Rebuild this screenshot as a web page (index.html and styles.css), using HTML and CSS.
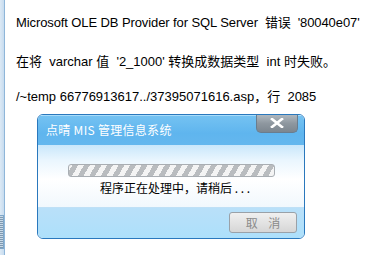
FILE: index.html
```html
<!DOCTYPE html>
<html>
<head>
<meta charset="utf-8">
<link rel="stylesheet" href="styles.css">
</head>
<body>
<div class="page">
  <div class="strip"><div class="grip"></div></div>
  <div class="content">
    <p class="line l1">Microsoft OLE DB Provider for SQL Server&nbsp; 错误&nbsp; '80040e07'</p>
    <p class="line l2">在将&nbsp; varchar 值&nbsp; '2_1000' 转换成数据类型&nbsp; int 时失败。</p>
    <p class="line l3">/~temp 66776913617../37395071616.asp，行&nbsp; 2085</p>
    <div class="dialog">
      <div class="titlebar">
        <span class="title">点晴 MIS 管理信息系统</span>
        <span class="close"><svg width="14" height="10" viewBox="0 0 14 10"><path d="M2 1 L12 9 M12 1 L2 9" stroke="#fff" stroke-width="2.6" stroke-linecap="square"/></svg></span>
      </div>
      <div class="dbody">
        <div class="progress"></div>
        <div class="msg">程序正在处理中，请稍后 . . .</div>
      </div>
      <div class="dfoot">
        <button class="cancel">取 消</button>
      </div>
    </div>
  </div>
</div>
</body>
</html>
```
FILE: styles.css
```css
html, body { margin: 0; padding: 0; background: #fff; }
.page { display: flex; width: 370px; height: 255px; overflow: hidden; }
.strip {
  width: 4px; flex: none; height: 255px;
  background: linear-gradient(to right, #dce9f5, #c7dcef);
  border-right: 1px solid #8fb6d9;
  position: relative;
}
.grip {
  position: absolute; left: 0; top: 215px; width: 3px; height: 32px;
  border: 1px solid #7fa7c9; border-left: none;
  background: repeating-linear-gradient(to bottom, #c8d9e8 0 1px, #7f99b0 1px 2px);
}
.content { padding-left: 11px; font-family: "Liberation Sans", Arial, "Noto Sans CJK SC", sans-serif; font-size: 13px; color: #000; }
.line { margin: 0; line-height: 16px; white-space: nowrap; }
.l1 { margin-top: 15px; letter-spacing: -0.1px; }
.l2 { margin-top: 23px; }
.l3 { margin-top: 19px; }
.dialog {
  margin-top: 9px; margin-left: 21px;
  width: 266px; height: 123px;
  border: 1px solid #2a78bd; border-radius: 6px;
  overflow: hidden;
  display: flex; flex-direction: column;
  font-family: "Noto Sans CJK SC", sans-serif; font-size: 12px;
}
.titlebar {
  height: 29px; flex: none;
  background: linear-gradient(to bottom, #74c2f2 0%, #5fb5ee 60%, #64b7ee 100%);
  border-top: 1px solid #a8dcfa;
  display: flex; align-items: flex-start; justify-content: space-between;
}
.title { color: #fff; margin-left: 8px; margin-top: 7px; line-height: 14px; letter-spacing: 0.3px; }
.close {
  width: 40px; height: 19px; margin-right: 6px; margin-top: -3px;
  border: 1px solid #6a7d8e; border-top: none; border-radius: 0 0 5px 5px;
  background: linear-gradient(to bottom, #b7bfc6, #8e979f 55%, #7c868f);
  display: flex; align-items: center; justify-content: center;
}
.dbody {
  height: 62px; flex: none;
  background: linear-gradient(to bottom, #c9e7fb 0%, #eaf6fe 25%, #ffffff 55%, #f1f8fd 100%);
  border-bottom: 1px solid #bfe0f6;
  display: flex; flex-direction: column; align-items: center;
}
.progress {
  width: 205px; height: 11px; margin-top: 19px;
  border: 1px solid #a9aeb3; border-radius: 3px;
  background: repeating-linear-gradient(-60deg, #f4f4f4 0 5px, #b9bcbf 5px 10px);
}
.msg { margin-top: 3px; margin-left: 8px; line-height: 16px; color: #000; }
.dfoot {
  flex: 1;
  background: linear-gradient(to bottom, #b9e0f9, #ade0fb);
  display: flex; justify-content: flex-end; align-items: flex-start;
}
.cancel {
  margin-top: 4px; margin-right: 7px;
  width: 68px; height: 21px; padding: 0;
  border: 1px solid #9aa1a8; border-radius: 3px;
  background: linear-gradient(to bottom, #f0f0f0, #d6d6d6);
  color: #8a8a8a; font-family: "Noto Sans CJK SC", sans-serif; font-size: 12px;
  letter-spacing: 4px; text-indent: 4px;
}
```
